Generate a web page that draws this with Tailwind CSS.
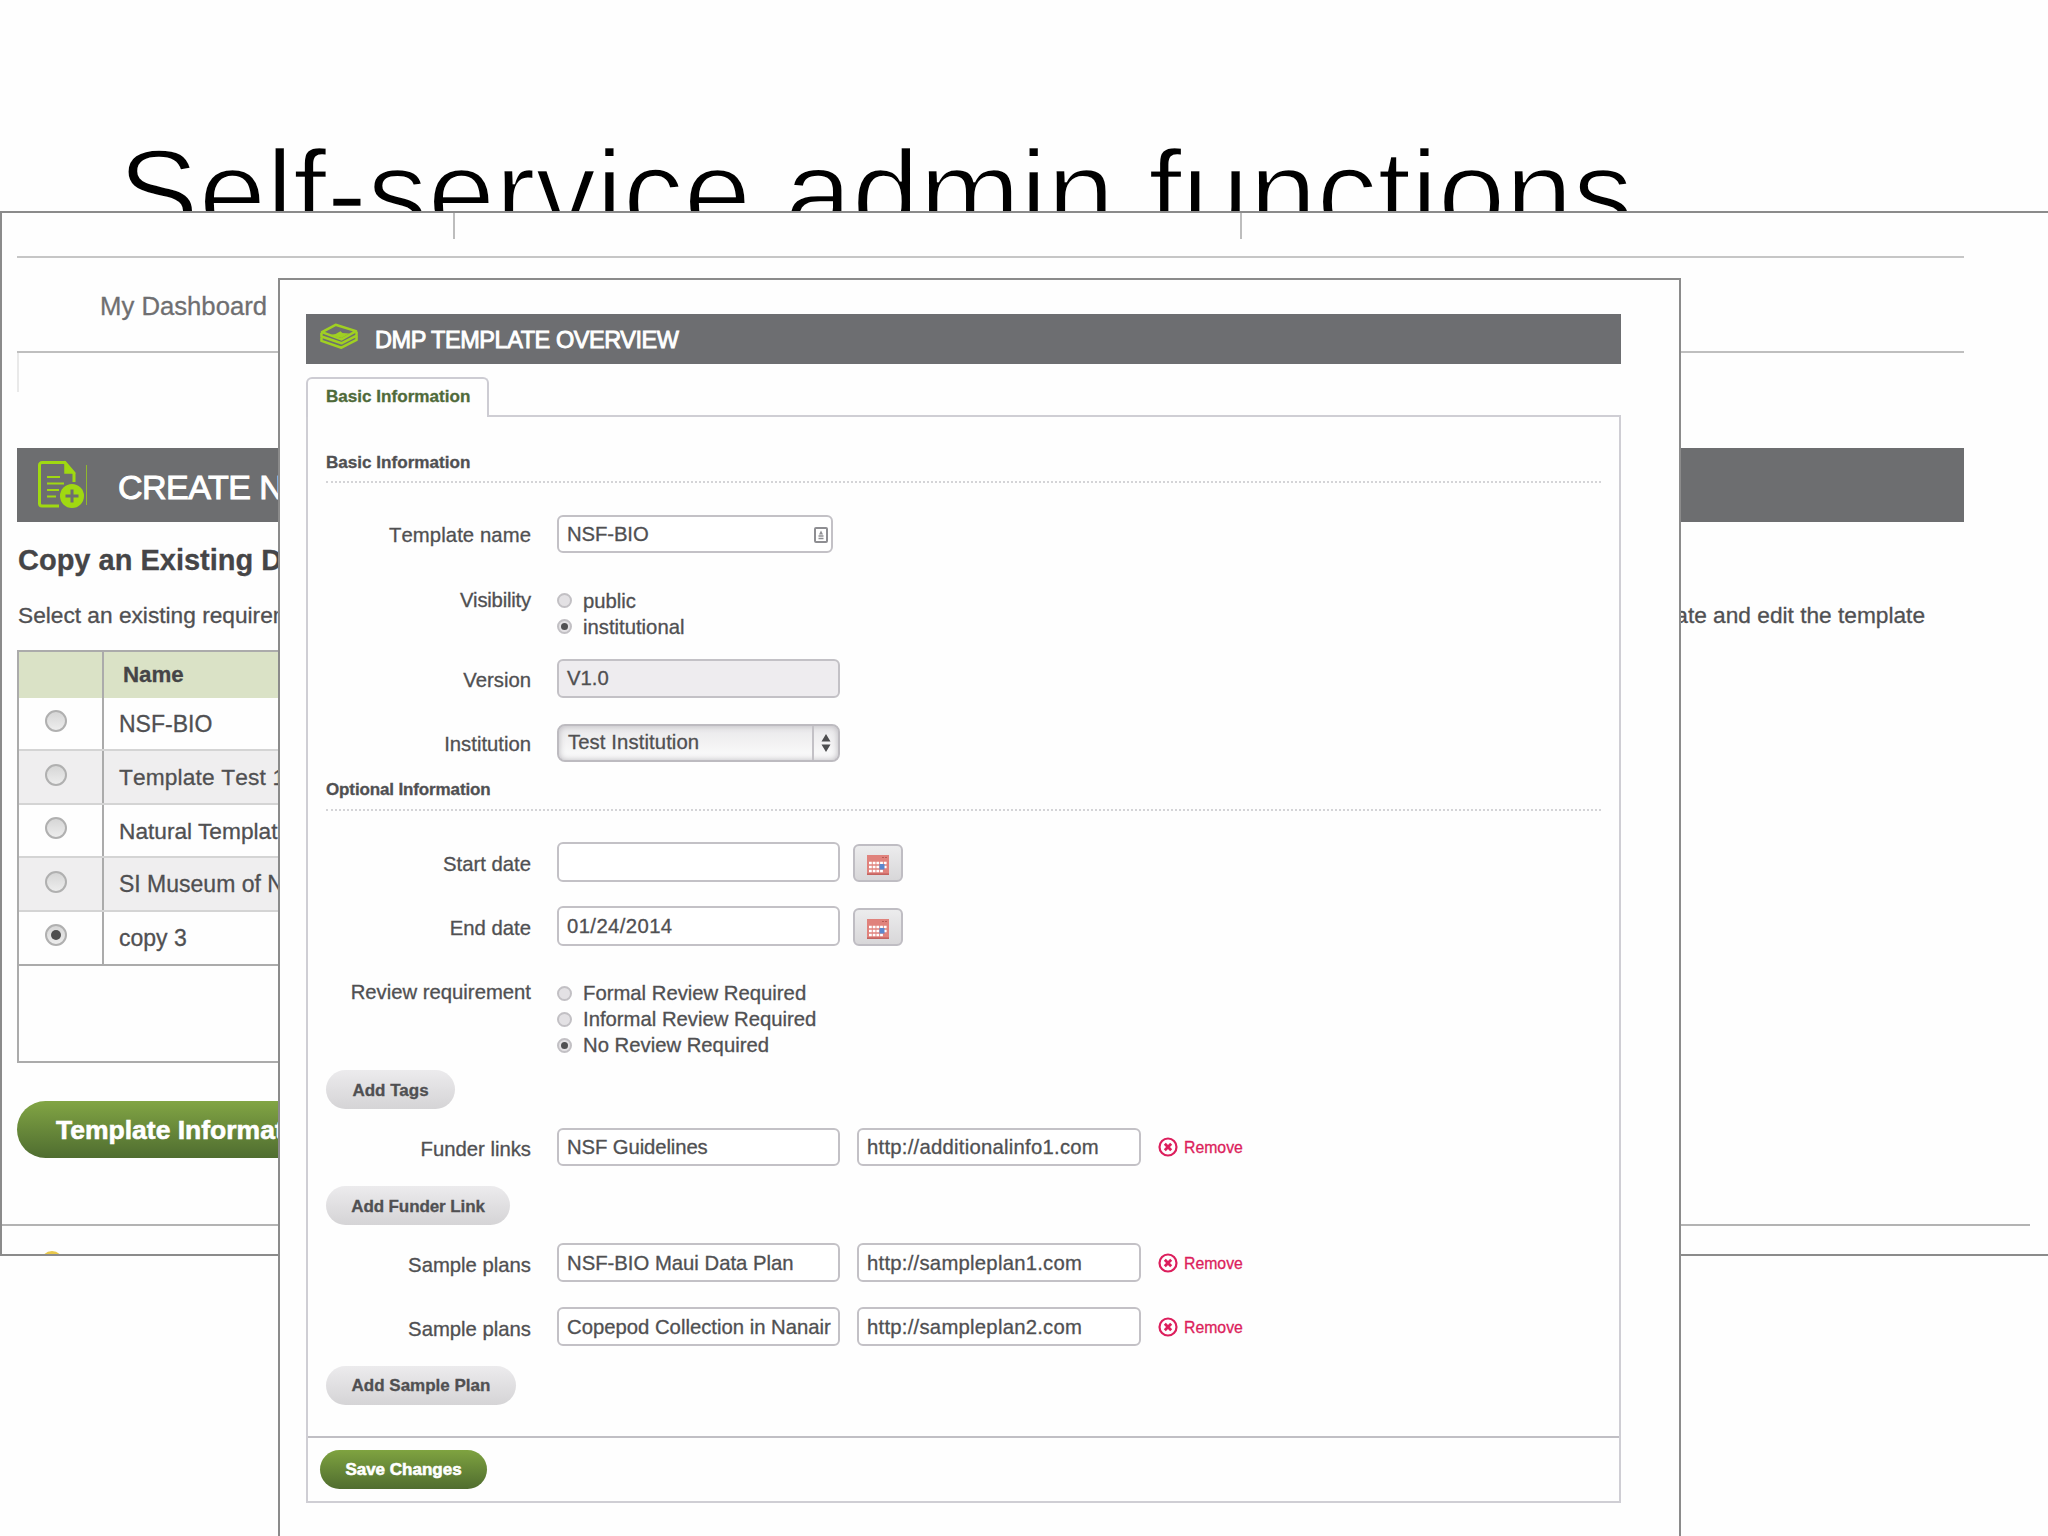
<!DOCTYPE html>
<html lang="en">
<head>
  <meta charset="UTF-8">
  <meta name="viewport" content="width=device-width, initial-scale=1.0">
  <title>Self-service admin functions</title>
  <script src="https://cdn.jsdelivr.net/npm/@tailwindcss/browser@4"></script>
</head>
<body class="bg-[#fefefe] font-['Liberation_Sans',Arial,sans-serif] text-[#505052] [-webkit-text-stroke:0.3px]">
<div class="relative w-[2048px] h-[1536px] overflow-hidden">
  <!-- the pale stroke thins the letters down to a light weight -->
  <h1 class="pt-[122px] pl-[118px] text-[121px] leading-[140px] tracking-[0.080px] text-black whitespace-nowrap [-webkit-text-stroke:2.300px_#fefefe]">Self-service admin functions</h1>

  <!-- Create new template window -->
  <div class="absolute left-0 top-[211px] w-[2060px] h-[1045px] bg-[#fefefe] border-2 border-[#8b8b8b] overflow-hidden">
    <div class="w-[1962px] pl-[15px]">
      <div class="flex h-[45px] border-b-2 border-[#c6c6c6]">
        <div class="w-[438px] h-[26px] border-r-2 border-[#bdbdbd]"></div>
        <div class="w-[787px] h-[26px] border-r-2 border-[#bdbdbd]"></div>
      </div>
      <div class="flex items-center h-[95px] pl-[83px] pt-[3px] border-b-2 border-[#bfbfbf] text-[25.7px] text-[#6f6f71]">My Dashboard</div>
      <div class="h-[39px] border-l-2 border-[#e9e9e9]"></div>

      <div class="mt-14 flex items-center h-[74px] bg-[#6d6e70] text-white">
        <svg class="ml-[21px] w-[50px] h-[50px]" viewBox="0 0 50 50" fill="none" stroke="#a0d911" stroke-width="3">
          <path d="M21 46H4a2.500 2.500 0 0 1-2.500-2.500V5A2.500 2.500 0 0 1 4 2.500h23L36 13v9"/>
          <path d="M27 2.500V13h9z" fill="#a0d911" stroke-width="1.500"/>
          <path d="M9 17h13M9 23.500h17M9 30h12M9 36.500h9" stroke-width="2"/>
          <circle cx="34" cy="36" r="12" fill="#a0d911" stroke="none"/>
          <path d="M34 29.500v13M27.500 36h13" stroke="#6d6e70"/>
          <path d="M48.500 5v40" stroke-width="1" opacity=".7"/>
        </svg>
        <span class="ml-[30px] pt-1 text-[34px] tracking-[-0.5px] [-webkit-text-stroke:1px_white]">CREATE N</span>
      </div>

      <h2 class="mt-[17px] h-[42px] leading-[42px] pl-px text-[29px] font-bold text-[#454547]">Copy an Existing D</h2>
      <div class="mt-[20px] flex justify-between h-[28px] leading-[28px] pl-px pr-[39px] text-[22.700px] whitespace-nowrap">
        <span>Select an existing requirements</span>
        <span>template and edit the template</span>
      </div>

      <div class="mt-[21px] w-[1500px] h-[413px] border-2 border-[#ababab] text-[23px]">
        <div class="flex items-center h-[46px] bg-[#dae2c6] font-bold text-[22.300px]">
          <div class="w-[85px] h-full border-r-2 border-[#ababab]"></div>
          <span class="pl-[19px] text-[#454547]">Name</span>
        </div>
        <div class="flex h-[53px] border-b-2 border-[#d4d4d4]">
          <div class="w-[85px] pl-[26px] pt-[12px] border-r-2 border-[#ababab]">
            <div class="size-[22px] rounded-full border-2 border-[#b0b0b0] bg-linear-to-b from-[#d6d6d6] to-[#ededed]"></div>
          </div>
          <span class="pl-[15px] leading-[52px]">NSF-BIO</span>
        </div>
        <div class="flex h-[54px] bg-[#efeeef] border-b-2 border-[#d4d4d4]">
          <div class="w-[85px] pl-[26px] pt-[13px] border-r-2 border-[#ababab]">
            <div class="size-[22px] rounded-full border-2 border-[#b0b0b0] bg-linear-to-b from-[#d6d6d6] to-[#ededed]"></div>
          </div>
          <span class="pl-[15px] leading-[53px] text-[22.700px] tracking-[0.150px] [font-kerning:none]">Template Test 1</span>
        </div>
        <div class="flex h-[53px] border-b-2 border-[#d4d4d4]">
          <div class="w-[85px] pl-[26px] pt-[12px] border-r-2 border-[#ababab]">
            <div class="size-[22px] rounded-full border-2 border-[#b0b0b0] bg-linear-to-b from-[#d6d6d6] to-[#ededed]"></div>
          </div>
          <span class="pl-[15px] leading-[52px] text-[22.700px]">Natural Template</span>
        </div>
        <div class="flex h-[54px] bg-[#efeeef] border-b-2 border-[#d4d4d4]">
          <div class="w-[85px] pl-[26px] pt-[13px] border-r-2 border-[#ababab]">
            <div class="size-[22px] rounded-full border-2 border-[#b0b0b0] bg-linear-to-b from-[#d6d6d6] to-[#ededed]"></div>
          </div>
          <span class="pl-[15px] leading-[53px]">SI Museum of N</span>
        </div>
        <div class="flex h-[54px] border-b-2 border-[#ababab]">
          <div class="w-[85px] pl-[26px] pt-[12px] border-r-2 border-[#ababab]">
            <div class="flex items-center justify-center size-[22px] rounded-full border-2 border-[#b0b0b0] bg-linear-to-b from-[#d6d6d6] to-[#ededed]">
              <div class="size-[10px] rounded-full bg-[#4f4f4f]"></div>
            </div>
          </div>
          <span class="pl-[15px] leading-[53px]">copy 3</span>
        </div>
      </div>

      <button type="button" class="mt-[38px] block w-[400px] h-[57px] pt-0.5 pl-[39px] text-left rounded-full bg-linear-to-b from-[#82a544] to-[#4f6d30] text-white text-[26.500px] font-bold [-webkit-text-stroke:0.6px]">Template Information</button>
    </div>
    <div class="mt-[66px] w-[2028px] border-t-2 border-[#b3b3b3]"></div>
    <div class="mt-[25px] ml-[39px] size-[22px] rounded-full bg-[#e9c84b]"></div>
  </div>

  <!-- Template overview window -->
  <div class="absolute left-[278px] top-[278px] w-[1403px] h-[1300px] bg-[#fefefe] border-2 border-[#8b8b8b] pl-[26px] pr-[58px] pt-[34px] text-[20.300px]">
    <div class="flex items-center h-[50px] bg-[#6d6e71] text-white">
      <svg class="ml-[14px] mb-[5px] w-[38px] h-[27px]" viewBox="0 0 39 27" fill="none" stroke="#a0d022" stroke-width="2.600" stroke-linejoin="round">
        <path d="M2 9L16 1.500L37 8L22 16.500z"/>
        <path d="M1.500 10v3.500L22 20.500l15.500-8V8.500"/>
        <path d="M1.500 14.500V18L22 25l15.500-8v-4"/>
        <path d="M10 12l6-1l5-3l2 2l7 .5l-8 4.500z" fill="#a0d022" stroke="none"/>
      </svg>
      <span class="ml-[17px] pt-[3px] text-[23.500px] tracking-[-0.450px] [-webkit-text-stroke:0.9px_white]">DMP TEMPLATE OVERVIEW</span>
    </div>

    <div class="relative z-10 mt-[13px] -mb-0.5 flex items-center w-[183px] h-[40px] pl-[18px] pb-[3px] rounded-t-md border-2 border-b-0 border-[#cdccd3] bg-[#fefefe] text-[17.100px] font-bold text-[#4f6a3a]">Basic Information</div>

    <form class="h-[1088px] border-2 border-[#cfced4]">
      <div class="px-[18px] pt-[33px]">
        <h3 class="h-[33px] leading-[26px] border-b-2 border-dotted border-[#d4d4d7] text-[17.100px] font-bold">Basic Information</h3>

        <div class="mt-8 flex items-center h-[38px]">
          <label class="w-[205px] pt-[3px] mr-[26px] text-right tracking-[0.080px] [font-kerning:none]">Template name</label>
          <div class="flex items-center justify-between w-[276px] h-full pl-[8px] pr-[3px] rounded-md border-2 border-[#c3c1c6] bg-white">
            <span class="tracking-[-0.100px]">NSF-BIO</span>
            <svg class="mt-[1px] w-[14px] h-[16px]" viewBox="0 0 14 16" fill="none" stroke="#8e8e92" stroke-width="2">
              <rect x="1" y="1" width="12" height="14" rx="1"/>
              <path d="M7 3.500l2 4H5z" fill="#8e8e92" stroke="none"/>
              <path d="M4.500 9h5M4.500 11.500h5" stroke-width="1.300"/>
            </svg>
          </div>
        </div>

        <div class="mt-[35px] flex">
          <label class="w-[205px] h-6 leading-6 mr-[26px] text-right tracking-[-0.200px]">Visibility</label>
          <div>
            <div class="flex items-center gap-[11px] h-[26px]">
              <div class="size-[15px] mb-0.5 rounded-full border-2 border-[#c2c0c4] bg-[#e3e1e4]"></div>
              <span>public</span>
            </div>
            <div class="flex items-center gap-[11px] h-[26px]">
              <div class="flex items-center justify-center size-[15px] mb-0.5 rounded-full border-2 border-[#c2c0c4] bg-[#e3e1e4]"><div class="size-[7px] rounded-full bg-[#505052]"></div></div>
              <span>institutional</span>
            </div>
          </div>
        </div>

        <div class="mt-[19px] flex items-center h-[39px]">
          <label class="w-[205px] pt-[3px] mr-[26px] text-right">Version</label>
          <div class="flex items-center w-[283px] h-full pl-[8px] rounded-md border-2 border-[#c3c1c6] bg-[#eeecef]">V1.0</div>
        </div>

        <div class="mt-[26px] flex items-center h-[38px]">
          <label class="w-[205px] pt-[2px] mr-[26px] text-right">Institution</label>
          <div class="flex w-[283px] h-full rounded-lg border-2 border-[#bdbbc0] bg-linear-to-b from-[#e9e8ea] to-[#fcfcfc] shadow-[inset_0_0_6px_#b9b7bc]">
            <span class="w-[253px] pl-[9px] leading-[33px] tracking-[0.100px]">Test Institution</span>
            <div class="flex items-center justify-center grow border-l-2 border-[#c3c1c6]">
              <svg class="w-[10px] h-[20px]" viewBox="0 0 10 20" fill="#4e4e50"><path d="M5 1l4.500 7.500h-9zM5 19l4.500-7.500h-9z"/></svg>
            </div>
          </div>
        </div>

        <h3 class="mt-[15px] h-[34px] leading-[26px] border-b-2 border-dotted border-[#d4d4d7] text-[17px] font-bold tracking-[-0.130px]">Optional Information</h3>

        <div class="mt-[31px] flex items-center h-[40px]">
          <label class="w-[205px] pt-[4px] mr-[26px] text-right">Start date</label>
          <div class="w-[283px] h-full rounded-md border-2 border-[#c3c1c6] bg-white"></div>
          <button type="button" class="self-end flex items-center justify-center ml-[13px] w-[50px] h-[38px] rounded-md border-2 border-[#bfbdc3] bg-linear-to-b from-[#ececed] to-[#d8d7d9]">
            <svg class="mt-[3px] w-[22px] h-[20px]" viewBox="0 0 22 20">
              <rect width="22" height="20" fill="#e0827c"/>
              <path d="M15 2.500h5" stroke="#b75b58" stroke-dasharray="2 1"/>
              <path d="M2 8h18M2 12h18M2 16h14" stroke="#fff" stroke-width="2.600" stroke-dasharray="2.800 .9"/>
              <rect x="12.500" y="9" width="5" height="5.500" fill="#5b87cf"/>
              <path d="M0 19.200h22" stroke="#c4635f" stroke-width="1.600"/>
            </svg>
          </button>
        </div>

        <div class="mt-[24px] flex items-center h-[40px]">
          <label class="w-[205px] pt-[4px] mr-[26px] text-right">End date</label>
          <div class="flex items-center w-[283px] h-full pl-[8px] pt-px rounded-md border-2 border-[#c3c1c6] bg-white tracking-[0.400px]">01/24/2014</div>
          <button type="button" class="self-end flex items-center justify-center ml-[13px] w-[50px] h-[38px] rounded-md border-2 border-[#bfbdc3] bg-linear-to-b from-[#ececed] to-[#d8d7d9]">
            <svg class="mt-[3px] w-[22px] h-[20px]" viewBox="0 0 22 20">
              <rect width="22" height="20" fill="#e0827c"/>
              <path d="M15 2.500h5" stroke="#b75b58" stroke-dasharray="2 1"/>
              <path d="M2 8h18M2 12h18M2 16h14" stroke="#fff" stroke-width="2.600" stroke-dasharray="2.800 .9"/>
              <rect x="12.500" y="9" width="5" height="5.500" fill="#5b87cf"/>
              <path d="M0 19.200h22" stroke="#c4635f" stroke-width="1.600"/>
            </svg>
          </button>
        </div>

        <div class="mt-[34px] flex">
          <label class="w-[205px] h-6 leading-6 mr-[26px] text-right">Review requirement</label>
          <div>
            <div class="flex items-center gap-[11px] h-[26px]">
              <div class="size-[15px] rounded-full border-2 border-[#c2c0c4] bg-[#e3e1e4]"></div>
              <span>Formal Review Required</span>
            </div>
            <div class="flex items-center gap-[11px] h-[26px]">
              <div class="size-[15px] rounded-full border-2 border-[#c2c0c4] bg-[#e3e1e4]"></div>
              <span>Informal Review Required</span>
            </div>
            <div class="flex items-center gap-[11px] h-[26px]">
              <div class="flex items-center justify-center size-[15px] rounded-full border-2 border-[#c2c0c4] bg-[#e3e1e4]"><div class="size-[7px] rounded-full bg-[#505052]"></div></div>
              <span>No Review Required</span>
            </div>
          </div>
        </div>

        <button type="button" class="mt-[12px] block w-[129px] h-[39px] pt-0.5 rounded-full bg-linear-to-b from-[#ecebed] to-[#d5d4d6] text-[17px] font-bold">Add Tags</button>

        <div class="mt-[19px] flex items-center h-[38px]">
          <label class="w-[205px] pt-[4px] mr-[26px] text-right">Funder links</label>
          <div class="flex items-center w-[283px] h-full pl-[8px] pt-px rounded-md border-2 border-[#c3c1c6] bg-white tracking-[-0.100px]">NSF Guidelines</div>
          <div class="flex items-center ml-[17px] w-[284px] h-full pl-[8px] pt-px rounded-md border-2 border-[#c3c1c6] bg-white tracking-[0.250px]">http://additionalinfo1.com</div>
          <svg class="ml-[17px] size-[20px]" viewBox="0 0 20 20" fill="none" stroke="#dc1e5c"><circle cx="10" cy="10" r="8.500" stroke-width="2.200"/><path d="M6.800 6.800l6.400 6.400M13.200 6.800l-6.400 6.400" stroke-width="2.800"/></svg>
          <a class="ml-[6px] pt-0.5 text-[15.800px] text-[#dc1e5c]">Remove</a>
        </div>

        <button type="button" class="mt-[20px] block w-[184px] h-[39px] pt-0.5 rounded-full bg-linear-to-b from-[#ecebed] to-[#d5d4d6] text-[17px] tracking-[-0.100px] font-bold">Add Funder Link</button>

        <div class="mt-[18px] flex items-center h-[39px]">
          <label class="w-[205px] pt-[5px] mr-[26px] text-right">Sample plans</label>
          <div class="flex items-center w-[283px] h-full pl-[8px] pt-px rounded-md border-2 border-[#c3c1c6] bg-white">NSF-BIO Maui Data Plan</div>
          <div class="flex items-center ml-[17px] w-[284px] h-full pl-[8px] pt-px rounded-md border-2 border-[#c3c1c6] bg-white tracking-[0.250px]">http://sampleplan1.com</div>
          <svg class="ml-[17px] size-[20px]" viewBox="0 0 20 20" fill="none" stroke="#dc1e5c"><circle cx="10" cy="10" r="8.500" stroke-width="2.200"/><path d="M6.800 6.800l6.400 6.400M13.200 6.800l-6.400 6.400" stroke-width="2.800"/></svg>
          <a class="ml-[6px] pt-0.5 text-[15.800px] text-[#dc1e5c]">Remove</a>
        </div>

        <div class="mt-[25px] flex items-center h-[39px]">
          <label class="w-[205px] pt-[5px] mr-[26px] text-right">Sample plans</label>
          <div class="flex items-center w-[283px] h-full pl-[8px] pt-px rounded-md border-2 border-[#c3c1c6] bg-white whitespace-nowrap">Copepod Collection in Nanair</div>
          <div class="flex items-center ml-[17px] w-[284px] h-full pl-[8px] pt-px rounded-md border-2 border-[#c3c1c6] bg-white tracking-[0.250px]">http://sampleplan2.com</div>
          <svg class="ml-[17px] size-[20px]" viewBox="0 0 20 20" fill="none" stroke="#dc1e5c"><circle cx="10" cy="10" r="8.500" stroke-width="2.200"/><path d="M6.800 6.800l6.400 6.400M13.200 6.800l-6.400 6.400" stroke-width="2.800"/></svg>
          <a class="ml-[6px] pt-0.5 text-[15.800px] text-[#dc1e5c]">Remove</a>
        </div>

        <button type="button" class="mt-[20px] block w-[190px] h-[39px] pt-px rounded-full bg-linear-to-b from-[#ecebed] to-[#d5d4d6] text-[17px] font-bold">Add Sample Plan</button>
      </div>

      <div class="mt-[31px] pt-[12px] pl-[12px] border-t-2 border-[#c0bfc4]">
        <button type="submit" class="block w-[167px] h-[39px] pt-px rounded-full bg-linear-to-b from-[#7fa340] to-[#506d2f] text-white text-[17px] font-bold [-webkit-text-stroke:0.6px]">Save Changes</button>
      </div>
    </form>
  </div>
</div>
</body>
</html>
